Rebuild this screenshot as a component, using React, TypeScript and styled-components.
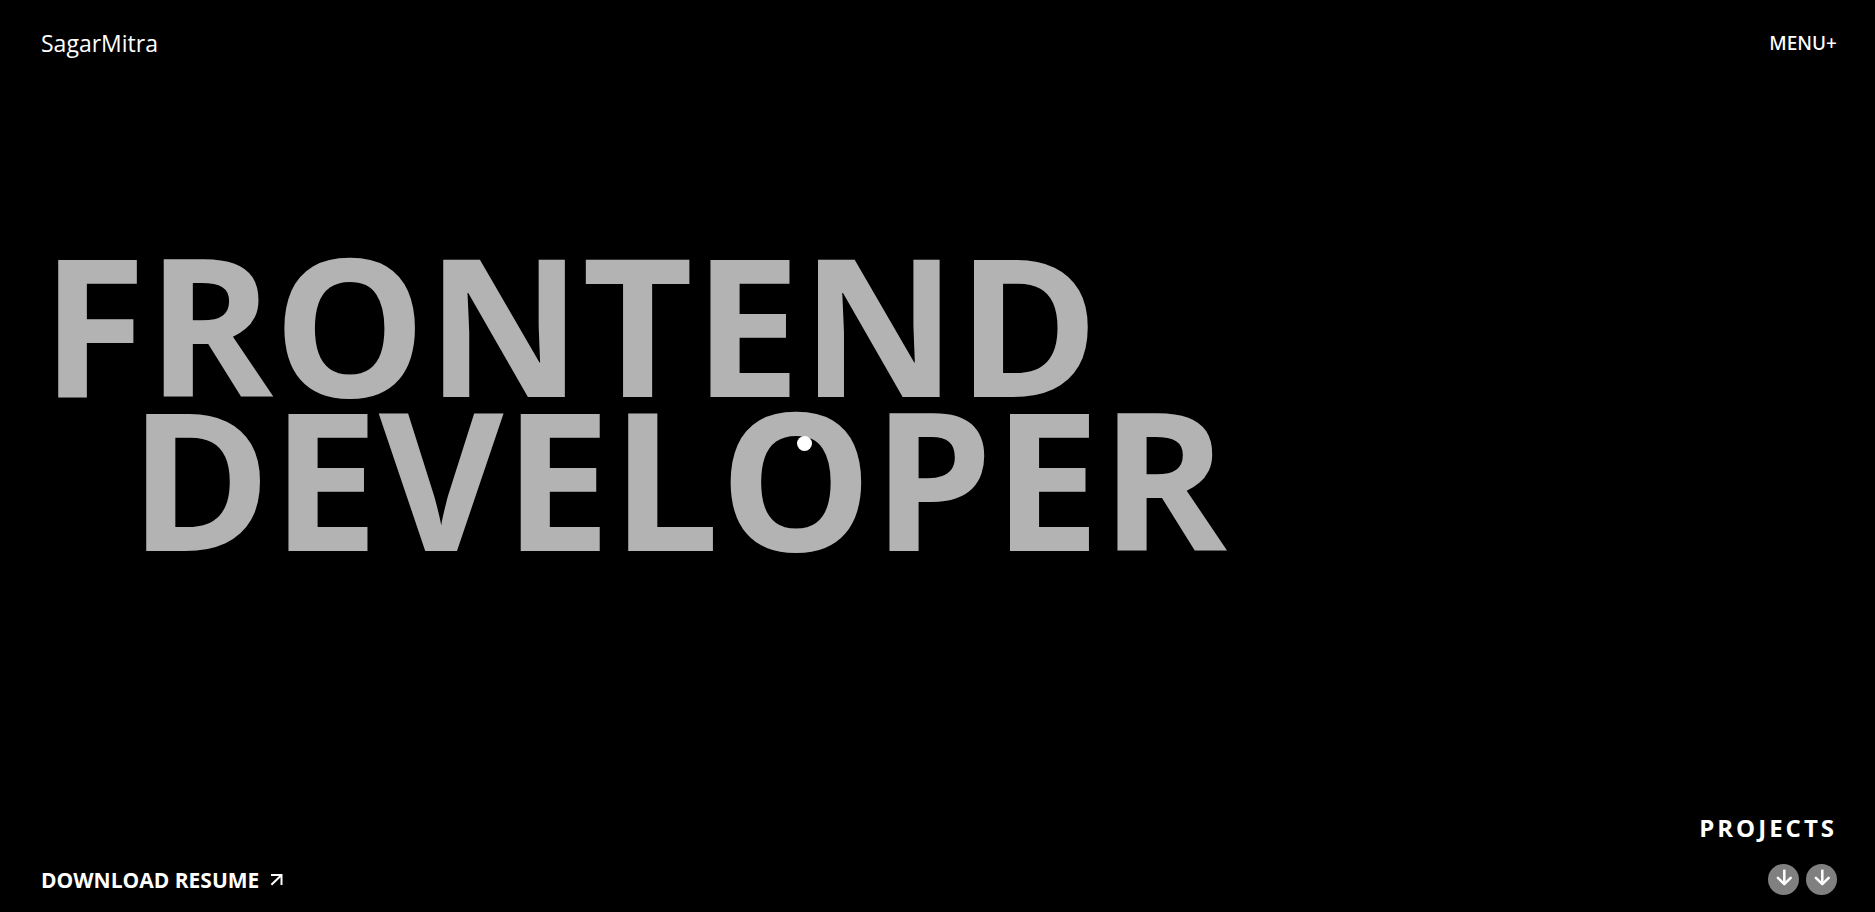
import React from "react";
import styled, { createGlobalStyle } from "styled-components";

const GlobalStyle = createGlobalStyle`
  * { box-sizing: border-box; }
  body {
    margin: 0;
    background: #000;
    color: #fff;
    font-family: "Open Sans", "Noto Sans", sans-serif;
  }
`;

const Page = styled.div`
  display: flex;
  flex-direction: column;
  min-height: 100vh;
  padding: 24px 38px 17px 41px;
`;

const TopBar = styled.header`
  display: flex;
  align-items: center;
  justify-content: space-between;
`;

const Brand = styled.a`
  color: inherit;
  font-size: 23px;
  line-height: 38px;
  text-decoration: none;
`;

const MenuButton = styled.button`
  padding: 0;
  border: 0;
  background: none;
  color: inherit;
  font-family: "Noto Sans", "Open Sans", sans-serif;
  font-size: 19px;
  font-weight: 500;
  line-height: 38px;
  cursor: pointer;
`;

const Hero = styled.main`
  flex: 1;
  padding-top: 184px;
`;

const Title = styled.h1`
  margin: 0;
  color: #b3b3b3;
  font-size: 192px;
  font-weight: 700;
  line-height: 154px;
`;

const TitleLine = styled.span<{ $indent?: number }>`
  display: block;
  padding-left: ${({ $indent = 0 }) => $indent}px;
`;

const Cursor = styled.div`
  position: absolute;
  top: 436px;
  left: 797px;
  width: 15px;
  height: 15px;
  border-radius: 50%;
  background: #fff;
  pointer-events: none;
`;

const BottomBar = styled.footer`
  display: flex;
  align-items: flex-end;
  justify-content: space-between;
`;

const ResumeLink = styled.a`
  display: flex;
  align-items: center;
  gap: 7px;
  color: inherit;
  font-size: 21px;
  font-weight: 700;
  line-height: 30px;
  text-decoration: none;
`;

const Projects = styled.section`
  display: flex;
  flex-direction: column;
  align-items: flex-end;
  gap: 16px;
`;

const ProjectsLabel = styled.h2`
  margin: 0;
  font-size: 24px;
  font-weight: 700;
  line-height: 40px;
  letter-spacing: 3px;
`;

const ArrowRow = styled.div`
  display: flex;
  gap: 7px;
`;

const ArrowButton = styled.button`
  display: grid;
  width: 31px;
  height: 31px;
  padding: 0;
  border: 0;
  border-radius: 50%;
  background: #808080;
  color: #fff;
  cursor: pointer;
`;

function OutwardArrow() {
  return (
    <svg
      width="20"
      height="20"
      viewBox="0 0 20 20"
      fill="none"
      stroke="currentColor"
      strokeWidth="2"
      aria-hidden="true"
    >
      <path d="M5 5H15.5V15" />
      <path d="M15.3 5.2L5.4 14.8" />
    </svg>
  );
}

function DownArrow() {
  return (
    <svg
      width="31"
      height="31"
      viewBox="0 0 31 31"
      fill="none"
      stroke="currentColor"
      strokeWidth="2.5"
      strokeLinecap="round"
      strokeLinejoin="round"
      aria-hidden="true"
    >
      <path d="M16.3 19.5V5.6" strokeLinecap="butt" />
      <path d="M9.9 13.8L16.3 20.1L22.7 13.8" />
    </svg>
  );
}

export default function App() {
  return (
    <>
      <GlobalStyle />
      <Page>
        <TopBar>
          <Brand href="#home">SagarMitra</Brand>
          <MenuButton type="button">MENU+</MenuButton>
        </TopBar>
        <Hero>
          <Title>
            <TitleLine>FRONTEND</TitleLine>
            <TitleLine $indent={88}>DEVELOPER</TitleLine>
          </Title>
        </Hero>
        <BottomBar>
          <ResumeLink href="#resume">
            DOWNLOAD RESUME
            <OutwardArrow />
          </ResumeLink>
          <Projects>
            <ProjectsLabel>PROJECTS</ProjectsLabel>
            <ArrowRow>
              <ArrowButton type="button" aria-label="Next project">
                <DownArrow />
              </ArrowButton>
              <ArrowButton type="button" aria-label="Last project">
                <DownArrow />
              </ArrowButton>
            </ArrowRow>
          </Projects>
        </BottomBar>
      </Page>
      <Cursor />
    </>
  );
}
